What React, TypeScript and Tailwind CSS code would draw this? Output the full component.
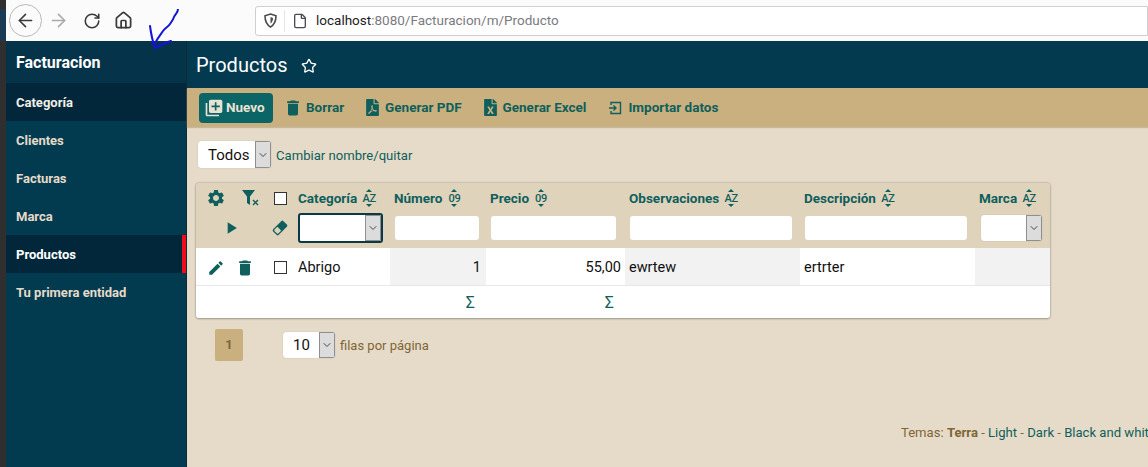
import React from "react";
import { ArrowLeft, ArrowRight, RotateCw, House, File, ChevronDown, Star } from "lucide-react";
import { MdSettings, MdEdit, MdDelete, MdLibraryAdd, MdPlayArrow } from "react-icons/md";
import { FaFilePdf, FaFileExcel } from "react-icons/fa";

function Sort({ label }: { label: string }) {
  return (
    <span className="relative inline-flex h-[18px] w-[14px] items-center justify-center text-[11px] font-medium leading-none tracking-[-0.3px] text-[#0f5f5c]">
      {label}
      <span className="absolute left-[4px] top-0 h-0 w-0 border-x-[3px] border-b-[3px] border-x-transparent border-b-[#0f5f5c]" />
      <span className="absolute bottom-0 left-[4px] h-0 w-0 border-x-[3px] border-t-[3px] border-x-transparent border-t-[#0f5f5c]" />
    </span>
  );
}

function Select({ w, value, boxed, h = 26 }: { w: number; value?: string; boxed?: boolean; h?: number }) {
  return (
    <div
      className={`flex overflow-hidden rounded-[3px] bg-white ${boxed ? "border-2 border-[#0a3a45]" : "shadow-[0_0_1px_#9a9a9a]"}`}
      style={{ width: w, height: h }}
    >
      <div className="flex flex-1 items-center pl-[10px] pt-[1px] text-[15px] text-[#111]">{value}</div>
      <div className="flex w-[16px] items-center justify-center border border-[#8f8f8f] bg-[#dcdcdc]">
        <ChevronDown size={12} strokeWidth={1.6} className="text-[#222]" />
      </div>
    </div>
  );
}

const inputCls = "h-[24px] rounded-[3px] bg-white";

function Head({ label, sort }: { label: string; sort: string }) {
  return (
    <div className="flex items-center gap-[5px] text-[13.5px] font-bold text-[#0f5f5c]">
      <span>{label}</span>
      <Sort label={sort} />
    </div>
  );
}

function ToolItem({ icon, label, gap }: { icon: React.ReactNode; label: string; gap: string }) {
  return (
    <div className={`flex items-center text-[13.5px] font-bold text-[#0f5f5c] ${gap}`}>
      {icon}
      <span>{label}</span>
    </div>
  );
}

const menu = ["Categoría", "Clientes", "Facturas", "Marca", "Productos", "Tu primera entidad"];

export default function App() {
  return (
    <div
      className="relative flex h-[467px] w-[1148px] overflow-hidden bg-[#333]"
      style={{ fontFamily: "Roboto, 'Liberation Sans', sans-serif" }}
    >
      <div className="flex w-[6px] shrink-0 flex-col bg-[#2f2f2f]">
        <div className="mt-[9px] h-[32px] bg-[#1d3a55]" />
      </div>
      <div className="flex min-w-0 flex-1 flex-col">
        {/* Browser bar */}
        <div className="flex h-[41px] shrink-0 items-center bg-[#fbfbfc] text-[#3a3a3c]">
          <div className="ml-[3px] flex h-[33px] w-[33px] items-center justify-center rounded-full border border-[#b9b9bb] bg-[#fbfbfc]">
            <ArrowLeft size={21} strokeWidth={1.8} />
          </div>
          <ArrowRight size={21} strokeWidth={1.8} className="ml-[6px] text-[#a9a9ab]" />
          <RotateCw size={18} strokeWidth={2.1} className="ml-[14px]" />
          <House size={19} strokeWidth={2.2} className="ml-[13px]" />
          <div className="ml-[122px] flex h-[30px] flex-1 items-center rounded-l-[3px] border border-[#cfcfd1] bg-white pl-[7px]">
            <svg width="15" height="15" viewBox="0 0 15 15" fill="none" stroke="#4a4a4f" strokeWidth="1.6" className="shrink-0">
              <path d="M7.5 1 13 2.8c0 5.2-1.6 9-5.5 11.2C3.6 11.8 2 8 2 2.8z" />
              <path d="M7.5 4 10 4.9c0 2.5-.8 4.3-2.5 5.5z" fill="#4a4a4f" stroke="none" />
            </svg>
            <div className="ml-[6px] h-[22px] w-px bg-[#e4e4e6]" />
            <File size={16} strokeWidth={2} className="ml-[7px] text-[#4a4a4f]" />
            <span className="ml-[8px] text-[13.5px] text-[#222]">
              localhost<span className="text-[#7b7b7f]">:8080/Facturacion/m/Producto</span>
            </span>
          </div>
        </div>

        <div className="flex min-h-0 flex-1">
          {/* Sidebar */}
          <aside className="flex w-[180px] shrink-0 flex-col bg-[#023a50]">
            <div className="flex h-[42px] items-center bg-[#05344a] pl-[10px] pt-[1px] text-[16px] font-bold text-white">Facturacion</div>
            {menu.map((m) => (
              <div
                key={m}
                className={`flex h-[38px] items-center pl-[10px] pt-[1px] text-[13px] font-bold ${
                  m === "Categoría"
                    ? "bg-[#02273a] text-[#f3efe6]"
                    : m === "Productos"
                    ? "border-r-4 border-[#f00c18] bg-[#02273a] text-white"
                    : "text-[#e5dbc9]"
                }`}
              >
                {m}
              </div>
            ))}
          </aside>

          {/* Main */}
          <main className="flex min-w-0 flex-1 flex-col border-l border-[#0c2a38] bg-[#e6dbc8]">
            <div className="flex h-[47px] shrink-0 items-center bg-[#033a4f] pl-[9px] text-white">
              <span className="text-[20px]">Productos</span>
              <Star size={16} strokeWidth={2} className="ml-[14px] mt-[3px]" />
            </div>
            <div className="flex h-[39px] shrink-0 items-center bg-[#c9b07e] pl-[12px] shadow-[0_1px_1px_#c4b8a0]">
              <div className="flex h-[30px] w-[74px] items-center gap-[2px] rounded-[4px] bg-[#0b6466] pl-[5px] text-[13.5px] font-bold text-[#e9e2d2]">
                <MdLibraryAdd size={20} className="shrink-0" />
                Nuevo
              </div>
              <div className="ml-[10px]"><ToolItem gap="gap-[3px]" icon={<MdDelete size={20} />} label="Borrar" /></div>
              <div className="ml-[22px]"><ToolItem gap="gap-[6px]" icon={<FaFilePdf className="h-[17px] w-[13px]" />} label="Generar PDF" /></div>
              <div className="ml-[22px]"><ToolItem gap="gap-[6px]" icon={<FaFileExcel className="h-[17px] w-[13px]" />} label="Generar Excel" /></div>
              <div className="ml-[22px]">
                <ToolItem
                  gap="gap-[6px]"
                  icon={
                    <svg width="14" height="14" viewBox="0 0 14 14" fill="none" stroke="currentColor" strokeWidth="1.4">
                      <path d="M3 4V1.5h9.5v11H3V10M1 7h7M5.5 4.5 8 7l-2.5 2.5" />
                    </svg>
                  }
                  label="Importar datos"
                />
              </div>
            </div>

            <div className="flex items-center pl-[11px] pt-[14px]">
              <Select w={73} value="Todos" h={27} />
              <span className="ml-[5px] pt-[3px] text-[13.1px] text-[#0f5f5c]">Cambiar nombre/quitar</span>
            </div>

            {/* Table */}
            <div className="ml-[9px] mt-[15px] w-[854px] overflow-hidden rounded-[3px] shadow-[0_0_2px_#8f8a7e,0_1px_2px_#a8a295]">
              <div className="flex h-[65px] bg-[#e0d3bc]">
                <div className="flex w-[95px] shrink-0 flex-col pl-[10px] pt-[6px] text-[#0f5f5c]">
                  <div className="flex h-[18px] items-center">
                    <MdSettings size={20} className="shrink-0" />
                    <svg width="20" height="18" viewBox="0 0 20 18" className="ml-[15px] shrink-0" fill="currentColor">
                      <path d="M1 1h13L9 7.5V16L6 14V7.5z" />
                      <path d="M12 11l5 5M17 11l-5 5" stroke="currentColor" strokeWidth="1.4" />
                    </svg>
                    <span className="ml-[13px] h-[13px] w-[13px] shrink-0 border border-[#333] bg-white" />
                  </div>
                  <div className="mt-[12px] flex h-[18px] items-center">
                    <MdPlayArrow size={20} className="ml-[15px] shrink-0" />
                    <svg width="16" height="16" viewBox="0 0 16 16" className="ml-[31px] shrink-0">
                      <g transform="rotate(-45 8 8)">
                        <rect x="0.7" y="4" width="14.6" height="8" rx="1.6" fill="#0f5f5c" />
                        <rect x="2" y="5.3" width="5" height="5.4" rx="0.8" fill="#e0d3bc" />
                      </g>
                    </svg>
                  </div>
                </div>
                <div className="flex w-[99px] shrink-0 flex-col pl-[7px] pt-[5px]">
                  <Head label="Categoría" sort="AZ" />
                  <div className="mt-[5px]"><Select w={85} boxed h={30} /></div>
                </div>
                <div className="flex w-[96px] shrink-0 flex-col pl-[4px] pt-[5px]">
                  <Head label="Número" sort="09" />
                  <div className={`${inputCls} ml-[1px] mt-[8px] w-[84px]`} />
                </div>
                <div className="flex w-[139px] shrink-0 flex-col pl-[4px] pt-[5px]">
                  <Head label="Precio" sort="09" />
                  <div className={`${inputCls} ml-[1px] mt-[8px] w-[125px]`} />
                </div>
                <div className="flex w-[175px] shrink-0 flex-col pl-[4px] pt-[5px]">
                  <Head label="Observaciones" sort="AZ" />
                  <div className={`${inputCls} ml-[1px] mt-[8px] w-[162px]`} />
                </div>
                <div className="flex w-[175px] shrink-0 flex-col pl-[4px] pt-[5px]">
                  <Head label="Descripción" sort="AZ" />
                  <div className={`${inputCls} ml-[1px] mt-[8px] w-[162px]`} />
                </div>
                <div className="flex w-[75px] shrink-0 flex-col pl-[4px] pt-[5px]">
                  <Head label="Marca" sort="AZ" />
                  <div className="ml-[2px] mt-[7px]"><Select w={61} h={26} /></div>
                </div>
              </div>

              <div className="flex h-[38px] border-b border-[#e8e8e8] bg-white text-[14.5px] text-[#111]">
                <div className="flex w-[95px] shrink-0 items-center pl-[11px] pt-[2px] text-[#0f5f5c]">
                  <MdEdit size={18} className="shrink-0" />
                  <MdDelete size={20} className="ml-[10px] shrink-0" />
                  <span className="ml-[19px] h-[13px] w-[13px] shrink-0 border border-[#333] bg-white" />
                </div>
                <div className="flex w-[99px] shrink-0 items-center pl-[7px] pt-[2px]">Abrigo</div>
                <div className="flex w-[96px] shrink-0 items-center justify-end bg-[#f2f2f2] pr-[5px] pt-[2px]">1</div>
                <div className="flex w-[139px] shrink-0 items-center justify-end pr-[4px] pt-[2px]">55,00</div>
                <div className="flex w-[175px] shrink-0 items-center bg-[#f2f2f2] pl-[4px] pt-[2px]">ewrtew</div>
                <div className="flex w-[175px] shrink-0 items-center pl-[4px] pt-[2px]">ertrter</div>
                <div className="w-[75px] shrink-0 bg-[#f2f2f2]" />
              </div>

              <div className="flex h-[32px] items-center bg-white pt-[1px] text-[16px] text-[#0f5f5c]">
                <div className="w-[279px] shrink-0 text-right">Σ</div>
                <div className="w-[139px] shrink-0 text-right">Σ</div>
              </div>
            </div>

            <div className="ml-[28px] mt-[11px] flex items-center">
              <div className="flex h-[32px] w-[28px] items-center justify-center rounded-[2px] bg-[#c9b07e] text-[13px] font-bold text-[#7f6637]">1</div>
              <div className="ml-[40px]"><Select w={52} value="10" /></div>
              <span className="ml-[5px] pt-[1px] text-[13px] text-[#7f6637]">filas por página</span>
            </div>

            <div className="ml-[714px] mt-[62px] whitespace-nowrap text-[13.1px] text-[#7f6637]">
              Temas: <b>Terra</b> - <span className="text-[#0f5f5c]">Light</span> - <span className="text-[#0f5f5c]">Dark</span> - <span className="text-[#0f5f5c]">Black and white</span>
            </div>
          </main>
        </div>
      </div>

      {/* Pen scribble over the screenshot */}
      <svg className="absolute left-[145px] top-[5px]" width="36" height="48" viewBox="0 0 36 48" fill="none" stroke="#1414d8" strokeWidth="2" strokeLinejoin="round">
        <path d="M33 4c0 4-3 5-4 8s-2 4-4 7-5 4-7 7-6 8-9 14C7 34 6 29 5 21c1 7 2 14 5 22 4-2 8-4 16-7-5 1-10 3-16 8" />
      </svg>
    </div>
  );
}
